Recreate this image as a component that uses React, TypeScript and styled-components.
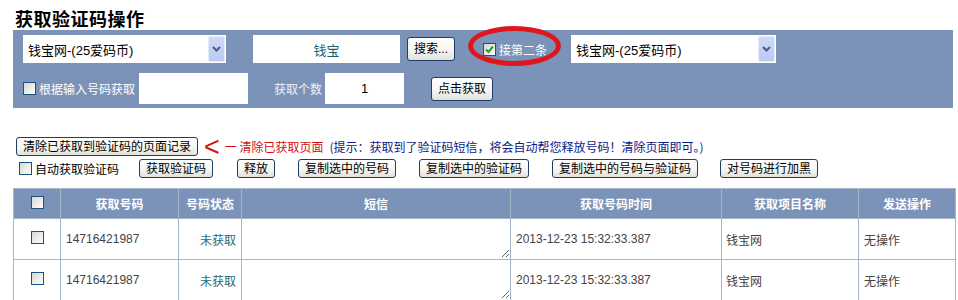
import * as React from "react";
import styled, { createGlobalStyle } from "styled-components";

const GlobalStyle = createGlobalStyle`
  body {
    margin: 0;
    background: #fff;
    font-family: "Liberation Sans", "Noto Sans CJK SC", sans-serif;
    font-size: 12px;
    color: #000;
  }
`;

const PANEL_BLUE = "#7b93b8";
const GRID_LINE = "#a6b5c7";

const Page = styled.div`
  padding: 0 0 0 13px;
  width: 945px;
`;

const Title = styled.h1`
  margin: 0 0 0 2px;
  height: 30px;
  line-height: 36px;
  font-size: 18px;
  font-weight: bold;
  letter-spacing: 0.5px;
  font-family: "Noto Sans CJK SC", sans-serif;
  color: #000;
`;

const Panel = styled.div`
  width: 940px;
  background: ${PANEL_BLUE};
  padding: 5px 0 4px 10px;
  box-sizing: border-box;
  display: flex;
  flex-direction: column;
  gap: 10px;
`;

const PanelRow = styled.div`
  display: flex;
  align-items: center;
`;

const Spaced = styled.div<{ $ml?: number }>`
  margin-left: ${(p) => p.$ml ?? 0}px;
  display: flex;
  align-items: center;
`;

const SelectBox = styled.div<{ $w: number }>`
  width: ${(p) => p.$w}px;
  height: 28px;
  background: #fff;
  display: flex;
  align-items: center;
  justify-content: space-between;
  box-sizing: border-box;
  padding: 1px 1px 1px 5px;
  font-size: 13px;
  color: #000;
`;

const SelectArrow = styled.span`
  width: 17px;
  height: 26px;
  box-sizing: border-box;
  border: 1px solid #e6ecfb;
  border-radius: 2px;
  background: linear-gradient(180deg, #cfdaf8 0%, #b9caf4 100%);
  display: flex;
  align-items: center;
  justify-content: center;
`;

const TextBox = styled.div<{ $w: number; $h: number; $color?: string }>`
  width: ${(p) => p.$w}px;
  height: ${(p) => p.$h}px;
  background: #fff;
  display: flex;
  align-items: center;
  justify-content: center;
  font-size: 13px;
  color: ${(p) => p.$color ?? "#000"};
`;

const XPButton = styled.button<{ $h?: number }>`
  font-family: "Liberation Sans", "Noto Sans CJK SC", sans-serif;
  font-size: 12px;
  line-height: 16px;
  color: #000;
  background: linear-gradient(180deg, #ffffff 0%, #f4f4f0 60%, #e2e2dc 100%);
  border: 1px solid #1d3f66;
  border-radius: 3px;
  padding: 0 6px;
  height: ${(p) => p.$h ?? 19}px;
  cursor: pointer;
  white-space: nowrap;
`;

const Box = styled.span`
  display: inline-flex;
  align-items: center;
  justify-content: center;
  width: 13px;
  height: 13px;
  box-sizing: border-box;
  border: 1px solid #1c5180;
  background: linear-gradient(135deg, #d8d8d2 0%, #f6f6f4 80%, #fff 100%);
  flex: none;
`;

const CheckLabel = styled.span<{ $color: string }>`
  margin-left: 3px;
  color: ${(p) => p.$color};
  font-size: 12px;
  font-family: "Noto Sans CJK SC", sans-serif;
`;

const PlainLabel = styled.span<{ $color: string }>`
  color: ${(p) => p.$color};
  font-size: 12px;
  font-family: "Noto Sans CJK SC", sans-serif;
`;

const Annotated = styled.div`
  position: relative;
  display: flex;
  align-items: center;
  height: 28px;
  margin-left: 28px;

  &::before {
    content: "";
    position: absolute;
    left: -15px;
    right: -14px;
    top: -9px;
    height: 40px;
    box-sizing: border-box;
    border: 5px solid #e0161e;
    border-radius: 50%;
    pointer-events: none;
  }
`;

const ActionLine = styled.div<{ $mt: number }>`
  display: flex;
  align-items: center;
  margin-top: ${(p) => p.$mt}px;
`;

const Arrow = styled.span`
  color: #d41010;
  font-size: 27px;
  font-weight: normal;
  line-height: 18px;
  margin-left: 6px;
  font-family: "Liberation Sans", sans-serif;
`;

const RedNote = styled.span`
  color: #d41010;
  font-size: 12px;
  margin-left: 5px;
  font-family: "Noto Sans CJK SC", sans-serif;
`;

const BlueNote = styled.span`
  color: #0a1a86;
  font-size: 12px;
  margin-left: 6px;
  font-family: "Noto Sans CJK SC", sans-serif;
`;

const Grid = styled.table`
  margin-top: 10px;
  border-collapse: collapse;
  table-layout: fixed;
  width: 942px;
  border: 1px solid ${GRID_LINE};
`;

const Th = styled.th`
  height: 29px;
  padding: 0;
  background: ${PANEL_BLUE};
  color: #fff;
  font-weight: bold;
  font-size: 12px;
  text-align: center;
  border: 1px solid ${GRID_LINE};
  font-family: "Noto Sans CJK SC", sans-serif;
`;

const Td = styled.td<{ $align?: string; $color?: string; $pad?: string }>`
  height: 40px;
  padding: ${(p) => p.$pad ?? "0 5px"};
  border: 1px solid ${GRID_LINE};
  text-align: ${(p) => p.$align ?? "left"};
  color: ${(p) => p.$color ?? "#444"};
  font-size: 12px;
  vertical-align: middle;
  overflow: hidden;
`;

const MsgArea = styled.textarea`
  display: block;
  width: 100%;
  height: 38px;
  box-sizing: border-box;
  border: none;
  outline: none;
  margin: 0;
  resize: both;
  background: #fff;
`;

const Chevron = () => (
  <svg width="9" height="6" viewBox="0 0 9 6">
    <path d="M1 1 L4.5 4.5 L8 1" fill="none" stroke="#4a5d83" strokeWidth="2" />
  </svg>
);

const Tick = () => (
  <svg width="11" height="11" viewBox="0 0 11 11">
    <path d="M2 5.5 L4.5 8 L9 2.5" fill="none" stroke="#21a32a" strokeWidth="2" />
  </svg>
);

const CheckBox = ({ checked }: { checked?: boolean }) => (
  <Box>{checked ? <Tick /> : null}</Box>
);

const Select = ({ w, text }: { w: number; text: string }) => (
  <SelectBox $w={w}>
    <span>{text}</span>
    <SelectArrow>
      <Chevron />
    </SelectArrow>
  </SelectBox>
);

const rows = [
  { phone: "14716421987", state: "未获取", time: "2013-12-23 15:32:33.387", project: "钱宝网", op: "无操作" },
  { phone: "14716421987", state: "未获取", time: "2013-12-23 15:32:33.387", project: "钱宝网", op: "无操作" },
];

const columns = [47, 118, 63, 269, 211, 137, 97];

const tools = ["获取验证码", "释放", "复制选中的号码", "复制选中的验证码", "复制选中的号码与验证码", "对号码进行加黑"];
const toolGaps = [20, 24, 23, 23, 23, 22];

export default function App() {
  return (
    <Page>
      <GlobalStyle />
      <Title>获取验证码操作</Title>
      <Panel>
        <PanelRow>
          <Select w={203} text="钱宝网-(25爱码币)" />
          <Spaced $ml={27}>
            <TextBox $w={147} $h={28} $color="#1e5f6e">钱宝</TextBox>
          </Spaced>
          <Spaced $ml={7}>
            <XPButton $h={24}>搜索...</XPButton>
          </Spaced>
          <Annotated>
            <CheckBox checked />
            <CheckLabel $color="#fff">接第二条</CheckLabel>
          </Annotated>
          <Spaced $ml={24}>
            <Select w={205} text="钱宝网-(25爱码币)" />
          </Spaced>
        </PanelRow>
        <PanelRow>
          <CheckBox />
          <CheckLabel $color="#fff">根据输入号码获取</CheckLabel>
          <Spaced $ml={4}>
            <TextBox $w={109} $h={31} />
          </Spaced>
          <Spaced $ml={26}>
            <PlainLabel $color="#eef2fa">获取个数</PlainLabel>
          </Spaced>
          <Spaced $ml={3}>
            <TextBox $w={79} $h={31}>1</TextBox>
          </Spaced>
          <Spaced $ml={27}>
            <XPButton $h={24}>点击获取</XPButton>
          </Spaced>
        </PanelRow>
      </Panel>

      <ActionLine $mt={29}>
        <Spaced $ml={3}>
          <XPButton $h={19}>清除已获取到验证码的页面记录</XPButton>
        </Spaced>
        <Arrow>&lt;</Arrow>
        <RedNote>一 清除已获取页面</RedNote>
        <BlueNote>(提示：获取到了验证码短信，将会自动帮您释放号码！清除页面即可。)</BlueNote>
      </ActionLine>

      <ActionLine $mt={3}>
        <Spaced $ml={6}>
          <CheckBox />
          <CheckLabel $color="#000">自动获取验证码</CheckLabel>
        </Spaced>
        {tools.map((t, i) => (
          <Spaced key={t} $ml={toolGaps[i]}>
            <XPButton $h={19}>{t}</XPButton>
          </Spaced>
        ))}
      </ActionLine>

      <Grid>
        <colgroup>
          {columns.map((w, i) => (
            <col key={i} style={{ width: w }} />
          ))}
        </colgroup>
        <thead>
          <tr>
            <Th>
              <CheckBox />
            </Th>
            <Th>获取号码</Th>
            <Th>号码状态</Th>
            <Th>短信</Th>
            <Th>获取号码时间</Th>
            <Th>获取项目名称</Th>
            <Th>发送操作</Th>
          </tr>
        </thead>
        <tbody>
          {rows.map((r, i) => (
            <tr key={i}>
              <Td $align="center" $pad="0">
                <CheckBox />
              </Td>
              <Td>{r.phone}</Td>
              <Td $align="right" $color="#1e6a78">{r.state}</Td>
              <Td $pad="0">
                <MsgArea defaultValue="" />
              </Td>
              <Td>{r.time}</Td>
              <Td $pad="0 4px">{r.project}</Td>
              <Td>{r.op}</Td>
            </tr>
          ))}
        </tbody>
      </Grid>
    </Page>
  );
}
